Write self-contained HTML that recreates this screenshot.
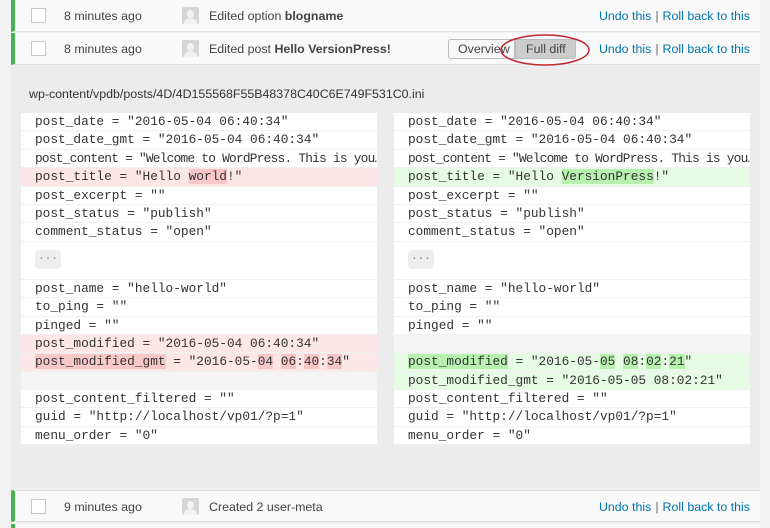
<!DOCTYPE html>
<html><head><meta charset="utf-8"><style>
*{margin:0;padding:0;box-sizing:border-box}
html,body{width:770px;height:528px;overflow:hidden}
body{background:#f1f1f1;font-family:"Liberation Sans",sans-serif;position:relative;color:#444}
.row{position:absolute;left:11px;width:749px;height:32px;background:#f9f9f9;border-left:4px solid #46b450;border-bottom:1px solid #e2e2e2;font-size:12.4px}
.row .cb{position:absolute;left:16px;top:8px;width:15px;height:15px;border:1px solid #c8c8c8;background:#fff}
.row .t{position:absolute;left:49px;top:9px}
.row .av{position:absolute;left:167px;top:7px;width:17px;height:17px;background:#d6d6d6;border-radius:2px;overflow:hidden}
.row .av:before{content:"";position:absolute;left:5px;top:3px;width:7px;height:8px;border-radius:50%;background:#f2f2f2}
.row .av:after{content:"";position:absolute;left:2px;top:11px;width:13px;height:10px;border-radius:50%;background:#f2f2f2}
.row .m{position:absolute;left:194px;top:9px}
.row .l{position:absolute;right:10px;top:9px;color:#0073aa}
.row .l span{color:#666;margin:0 4px}
.exp{position:absolute;left:11px;top:66px;width:749px;height:422px;background:#ececec}
.path{position:absolute;left:29px;top:87px;font-size:12.4px;color:#333}
.tbl{position:absolute;top:113px;width:356px;background:#fff;font-family:"Liberation Mono",monospace;font-size:12.8px;color:#333}
.r{height:18.4px;line-height:18.4px;padding-left:14px;border-bottom:1px solid #f0f0f0;white-space:nowrap;overflow:hidden}
.del{background:#fde6e6}.add{background:#e6fbe3}.emp{background:#f4f4f4}
.dh{background:#f8c8c8}.ah{background:#b8f0b0}
.gap{height:38px;position:relative;border-bottom:1px solid #f0f0f0}
.gap b{position:absolute;left:14px;top:8px;width:26px;height:19px;background:#eee;border-radius:4px;font-weight:normal;font-size:11px;color:#888;text-align:center;line-height:15px}
.btn{position:absolute;top:6px;font-size:12.4px;height:20px;line-height:18px;border:1px solid #bbb}
.sq{letter-spacing:-0.75px}
</style></head><body>
<div class="row" style="top:0"><div class="cb"></div><div class="t">8 minutes ago</div><div class="av"></div><div class="m">Edited option <b>blogname</b></div><div class="l">Undo this<span>|</span>Roll back to this</div></div>
<div class="row" style="top:33px"><div class="cb"></div><div class="t">8 minutes ago</div><div class="av"></div><div class="m">Edited post <b>Hello VersionPress!</b></div>
<div class="btn" style="left:433px;width:67px;background:#f7f7f7;border-radius:3px 0 0 3px;padding-left:9px">Overview</div>
<div class="btn" style="left:500px;width:61px;background:#ccc;border-radius:0 3px 3px 0;padding-left:10px">Full diff</div>
<svg style="position:absolute;left:480px;top:-2px" width="100" height="40"><ellipse cx="50" cy="19" rx="44" ry="15" fill="none" stroke="#c0272d" stroke-width="1.5"/></svg>
<div class="l">Undo this<span>|</span>Roll back to this</div></div>
<div class="exp"></div>
<div class="path">wp-content/vpdb/posts/4D/4D155568F55B48378C40C6E749F531C0.ini</div>
<div class="tbl" style="left:21px">
<div class="r">post_date = "2016-05-04 06:40:34"</div>
<div class="r">post_date_gmt = "2016-05-04 06:40:34"</div>
<div class="r sq">post_content = "Welcome to WordPress. This is you…</div>
<div class="r del">post_title = "Hello <span class="dh">world</span>!"</div>
<div class="r">post_excerpt = ""</div>
<div class="r">post_status = "publish"</div>
<div class="r">comment_status = "open"</div>
<div class="gap"><b>...</b></div>
<div class="r">post_name = "hello-world"</div>
<div class="r">to_ping = ""</div>
<div class="r">pinged = ""</div>
<div class="r del">post_modified = "2016-05-04 06:40:34"</div>
<div class="r del"><span class="dh">post_modified_gmt</span> = "2016-05-<span class="dh">04</span> <span class="dh">06</span>:<span class="dh">40</span>:<span class="dh">34</span>"</div>
<div class="r emp"></div>
<div class="r">post_content_filtered = ""</div>
<div class="r">guid = "http://localhost/vp01/?p=1"</div>
<div class="r">menu_order = "0"</div>
</div>
<div class="tbl" style="left:394px">
<div class="r">post_date = "2016-05-04 06:40:34"</div>
<div class="r">post_date_gmt = "2016-05-04 06:40:34"</div>
<div class="r sq">post_content = "Welcome to WordPress. This is you…</div>
<div class="r add">post_title = "Hello <span class="ah">VersionPress</span>!"</div>
<div class="r">post_excerpt = ""</div>
<div class="r">post_status = "publish"</div>
<div class="r">comment_status = "open"</div>
<div class="gap"><b>...</b></div>
<div class="r">post_name = "hello-world"</div>
<div class="r">to_ping = ""</div>
<div class="r">pinged = ""</div>
<div class="r emp"></div>
<div class="r add"><span class="ah">post_modified</span> = "2016-05-<span class="ah">05</span> <span class="ah">08</span>:<span class="ah">02</span>:<span class="ah">21</span>"</div>
<div class="r add">post_modified_gmt = "2016-05-05 08:02:21"</div>
<div class="r">post_content_filtered = ""</div>
<div class="r">guid = "http://localhost/vp01/?p=1"</div>
<div class="r">menu_order = "0"</div>
</div>
<div class="row" style="top:490px;border-top:1px solid #e2e2e2"><div class="cb"></div><div class="t">9 minutes ago</div><div class="av"></div><div class="m">Created 2 user-meta</div><div class="l">Undo this<span>|</span>Roll back to this</div></div>
<div class="row" style="top:524px;height:4px;border-bottom:0"></div>
</body></html>
